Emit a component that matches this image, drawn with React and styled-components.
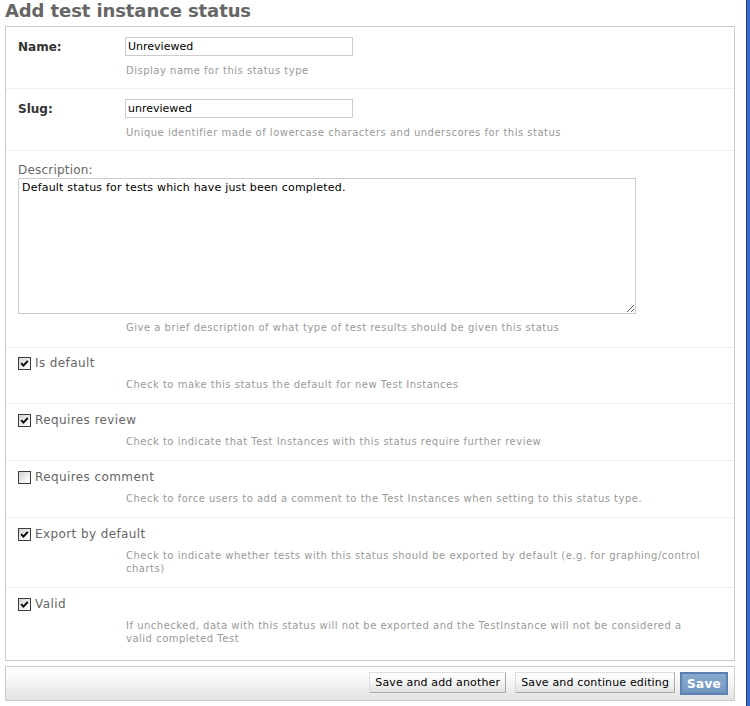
import React from 'react';
import styled, { createGlobalStyle } from 'styled-components';

const GlobalStyle = createGlobalStyle`
	html, body {
		margin: 0;
		padding: 0;
		background: #fff;
	}

	body {
		font-family: "DejaVu Sans", Verdana, sans-serif;
		font-size: 12px;
		color: #333;
	}
`;

const CHECKS = [
	{ label: 'Is default', checked: true, help: 'Check to make this status the default for new Test Instances' },
	{ label: 'Requires review', checked: true, help: 'Check to indicate that Test Instances with this status require further review' },
	{ label: 'Requires comment', checked: false, help: 'Check to force users to add a comment to the Test Instances when setting to this status type.' },
	{ label: 'Export by default', checked: true, help: 'Check to indicate whether tests with this status should be exported by default (e.g. for graphing/control charts)' },
	{ label: 'Valid', checked: true, help: 'If unchecked, data with this status will not be exported and the TestInstance will not be considered a valid completed Test' },
];

function CheckBox({ checked }) {
	return (
		<Box>
			{ checked && (
				<svg width="9" height="9" viewBox="0 0 9 9">
					<path d="M1.2 4.2 L3.4 6.6 L7.8 1.8" fill="none" stroke="#000" strokeWidth="1.9" />
				</svg>
			) }
		</Box>
	);
}

function App() {
	return (
		<Screen>
			<GlobalStyle />
			<Content>
				<Title>Add test instance status</Title>

				<Module>
					<Row>
						<FieldLine>
							<Label $required>Name:</Label>
							<TextInput defaultValue="Unreviewed" />
						</FieldLine>
						<Help>Display name for this status type</Help>
					</Row>

					<Row>
						<FieldLine>
							<Label $required>Slug:</Label>
							<TextInput defaultValue="unreviewed" />
						</FieldLine>
						<Help>Unique identifier made of lowercase characters and underscores for this status</Help>
					</Row>

					<Row $top={ 11 } $bottom={ 13 }>
						<BlockLabel>Description:</BlockLabel>
						<TextArea defaultValue="Default status for tests which have just been completed." />
						<Help $gap={ 7 }>Give a brief description of what type of test results should be given this status</Help>
					</Row>

					{ CHECKS.map((c, i) => (
						<Row
							key={ c.label }
							$top={ i === 0 ? 7 : 8 }
							$bottom={ i === CHECKS.length - 1 ? 15 : 12 }
						>
							<CheckLine>
								<CheckBox checked={ c.checked } />
								{ c.label }
							</CheckLine>
							<Help>{ c.help }</Help>
						</Row>
					)) }
				</Module>

				<SubmitRow>
					<Button>Save and add another</Button>
					<Button>Save and continue editing</Button>
					<Button $primary>Save</Button>
				</SubmitRow>
			</Content>
			<WindowEdge />
		</Screen>
	);
}

export default App;

const Screen = styled.div`
	display: flex;
	width: 750px;
	min-height: 706px;
`;

const Content = styled.div`
	width: 730px;
	padding: 0 11px 0 5px;
`;

const WindowEdge = styled.div`
	width: 3px;
	border-left: 1px solid #1e3f86;
	background: #3a6bc9;
`;

const Title = styled.h1`
	margin: 0 0 4px;
	font-size: 18px;
	line-height: 22px;
	font-weight: bold;
	letter-spacing: -0.1px;
	color: #666;
`;

const Module = styled.div`
	border: 1px solid #ccc;
	margin-bottom: 5px;
`;

const Row = styled.div`
	padding: ${ p => p.$top ?? 10 }px 12px ${ p => p.$bottom ?? 11 }px;
	border-bottom: 1px solid #eee;

	&:last-child {
		border-bottom: none;
	}
`;

const FieldLine = styled.div`
	display: flex;
	align-items: center;
	height: 19px;
`;

const Label = styled.label`
	width: 107px;
	flex-shrink: 0;
	font-size: 12px;
	font-weight: ${ p => p.$required ? 'bold' : 'normal' };
	color: ${ p => p.$required ? '#333' : '#666' };
`;

const BlockLabel = styled.label`
	display: block;
	font-size: 12px;
	line-height: 16px;
	letter-spacing: 0.2px;
	color: #666;
`;

const TextInput = styled.input`
	box-sizing: border-box;
	width: 228px;
	height: 19px;
	margin: 0;
	padding: 1px 2px;
	border: 1px solid #ccc;
	font-family: inherit;
	font-size: 11px;
	color: #000;
	outline: none;
`;

const TextArea = styled.textarea`
	display: block;
	box-sizing: border-box;
	width: 618px;
	height: 136px;
	margin: 0;
	padding: 2px 3px;
	border: 1px solid #ccc;
	font-family: inherit;
	font-size: 11px;
	line-height: 14px;
	letter-spacing: 0.2px;
	color: #000;
	outline: none;
`;

const CheckLine = styled.label`
	display: flex;
	align-items: center;
	gap: 4px;
	height: 15px;
	font-size: 12px;
	letter-spacing: 0.4px;
	color: #666;
`;

const Box = styled.span`
	box-sizing: border-box;
	display: inline-flex;
	align-items: center;
	justify-content: center;
	width: 13px;
	height: 13px;
	margin-top: 2px;
	border: 1px solid #3c3c3c;
	background: linear-gradient(135deg, #d4d4d0 0%, #f4f4f2 70%, #fff 100%);
`;

const Help = styled.p`
	margin: ${ p => p.$gap ?? 8 }px 0 0 108px;
	max-width: 580px;
	font-size: 10px;
	line-height: 13px;
	letter-spacing: 0.5px;
	color: #999;
`;

const SubmitRow = styled.div`
	display: flex;
	justify-content: flex-end;
	align-items: flex-start;
	box-sizing: border-box;
	height: 35px;
	padding: 5px 6px 0;
	border: 1px solid #ccc;
	background: linear-gradient(to bottom, #fff 0%, #f7f7f7 40%, #e2e2e2 100%);
`;

const Button = styled.button`
	box-sizing: border-box;
	height: ${ p => p.$primary ? 23 : 21 }px;
	margin-left: ${ p => p.$primary ? 5 : 9 }px;
	padding: 0 5px;
	font-family: inherit;
	font-size: ${ p => p.$primary ? 12 : 11 }px;
	font-weight: ${ p => p.$primary ? 'bold' : 'normal' };
	letter-spacing: ${ p => p.$primary ? '0.3px' : '0.15px' };
	color: ${ p => p.$primary ? '#fff' : '#000' };
	border: ${ p => p.$primary ? '2px solid #5b80b2' : '1px solid #bbb' };
	border-color: ${ p => p.$primary ? '#5b80b2' : '#ddd #aaa #aaa #ddd' };
	background: ${ p => p.$primary
		? 'linear-gradient(to bottom, #86a8cf 0%, #7ca0c7 60%, #6f95c0 100%)'
		: 'linear-gradient(to bottom, #fff 0%, #f4f4f4 50%, #e0e0e0 100%)' };
	cursor: pointer;
`;
